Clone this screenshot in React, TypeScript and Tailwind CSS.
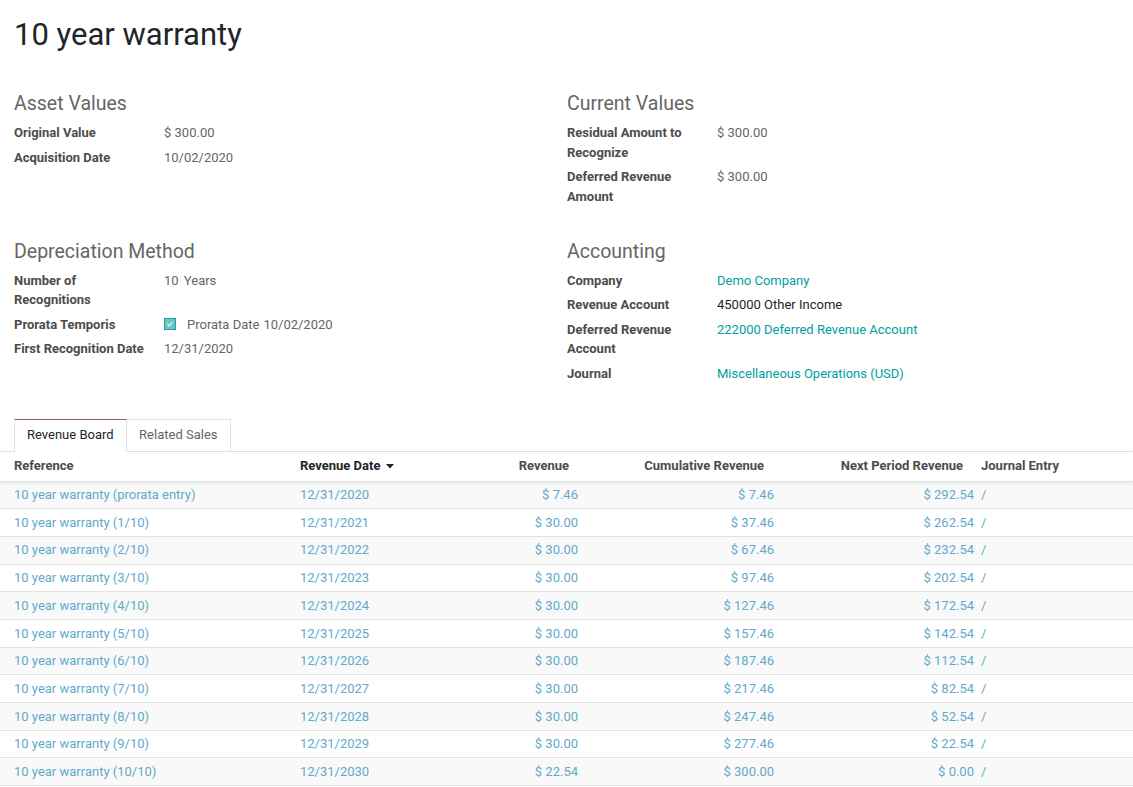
import React from "react";

type Field = { label: string; value: React.ReactNode };

function Group({ title, fields }: { title: string; fields: Field[] }) {
  return (
    <div className="flex flex-col">
      <div className="text-[19.5px] leading-[24px] text-[#666666] mb-[4.5px]">{title}</div>
      {fields.map((f, i) => (
        <div key={i} className="flex py-[2.5px] leading-[19.5px] text-[13px]">
          <div className="w-[150px] shrink-0 pr-[10px] font-bold text-[#4c4c4c]">{f.label}</div>
          <div className="flex-1">{f.value}</div>
        </div>
      ))}
    </div>
  );
}

const grey = "text-[#666666]";
const link = "text-[#00a09d]";

const rows = [
  ["10 year warranty (prorata entry)", "12/31/2020", "$ 7.46", "$ 7.46", "$ 292.54"],
  ["10 year warranty (1/10)", "12/31/2021", "$ 30.00", "$ 37.46", "$ 262.54"],
  ["10 year warranty (2/10)", "12/31/2022", "$ 30.00", "$ 67.46", "$ 232.54"],
  ["10 year warranty (3/10)", "12/31/2023", "$ 30.00", "$ 97.46", "$ 202.54"],
  ["10 year warranty (4/10)", "12/31/2024", "$ 30.00", "$ 127.46", "$ 172.54"],
  ["10 year warranty (5/10)", "12/31/2025", "$ 30.00", "$ 157.46", "$ 142.54"],
  ["10 year warranty (6/10)", "12/31/2026", "$ 30.00", "$ 187.46", "$ 112.54"],
  ["10 year warranty (7/10)", "12/31/2027", "$ 30.00", "$ 217.46", "$ 82.54"],
  ["10 year warranty (8/10)", "12/31/2028", "$ 30.00", "$ 247.46", "$ 52.54"],
  ["10 year warranty (9/10)", "12/31/2029", "$ 30.00", "$ 277.46", "$ 22.54"],
  ["10 year warranty (10/10)", "12/31/2030", "$ 22.54", "$ 300.00", "$ 0.00"],
];

const cols = "grid grid-cols-[289px_146px_148px_196px_200px_1fr]";

export default function App() {
  return (
    <div
      className="w-[1133px] h-[787px] overflow-hidden bg-white text-[13px]"
      style={{ fontFamily: "Roboto, 'Liberation Sans', sans-serif" }}
    >
      <div className="px-[14px]">
        <div className="pt-[17px] text-[31px] leading-[36px] text-[#212529]">10 year warranty</div>
        <div className="mt-[39px] grid grid-cols-[553px_1fr] gap-y-[31px]">
          <Group
            title="Asset Values"
            fields={[
              { label: "Original Value", value: <span className={grey}>$ 300.00</span> },
              { label: "Acquisition Date", value: <span className={grey}>10/02/2020</span> },
            ]}
          />
          <Group
            title="Current Values"
            fields={[
              { label: "Residual Amount to Recognize", value: <span className={grey}>$ 300.00</span> },
              { label: "Deferred Revenue Amount", value: <span className={grey}>$ 300.00</span> },
            ]}
          />
          <Group
            title="Depreciation Method"
            fields={[
              {
                label: "Number of Recognitions",
                value: (
                  <span className={grey}>
                    10 <span className="ml-[2px]">Years</span>
                  </span>
                ),
              },
              {
                label: "Prorata Temporis",
                value: (
                  <span className={`flex items-center ${grey}`}>
                    <span className="w-[12px] h-[12px] bg-[#6cc4c1] border border-[#1ba39f] flex items-center justify-center mr-[11px]">
                      <svg width="8" height="8" viewBox="0 0 8 8">
                        <path d="M1.5 4.2 L3.2 5.8 L6.5 2.3" stroke="#e8f6f5" strokeWidth="1.2" fill="none" />
                      </svg>
                    </span>
                    Prorata Date <span className="ml-[4px]">10/02/2020</span>
                  </span>
                ),
              },
              { label: "First Recognition Date", value: <span className={grey}>12/31/2020</span> },
            ]}
          />
          <Group
            title="Accounting"
            fields={[
              { label: "Company", value: <span className={link}>Demo Company</span> },
              { label: "Revenue Account", value: <span className="text-[#212529]">450000 Other Income</span> },
              { label: "Deferred Revenue Account", value: <span className={link}>222000 Deferred Revenue Account</span> },
              { label: "Journal", value: <span className={link}>Miscellaneous Operations (USD)</span> },
            ]}
          />
        </div>
      </div>

      {/* Tabs */}
      <div className="mt-[33px] flex border-b border-[#dee2e6] pl-[14px]">
        <div className="px-[12px] flex items-center text-[#212529] border-t border-t-[#875a7b] border-x border-x-[#dee2e6] bg-white -mb-px h-[33px] pb-px">
          Revenue Board
        </div>
        <div className="h-[32px] px-[12.5px] flex items-center text-[#666666] border-t border-r border-[#dee2e6]">
          Related Sales
        </div>
      </div>

      {/* Table */}
      <div className="relative">
        <div className={`${cols} h-[30px] items-center font-bold text-[#4c4c4c] border-b border-[#dee2e6] shadow-[0_2px_4px_rgba(0,0,0,0.07)] relative z-10 bg-white`}>
          <div className="pl-[14px]">Reference</div>
          <div className="pl-[11px] text-[#212529] flex items-center">
            Revenue Date
            <svg className="ml-[6px]" width="8" height="5" viewBox="0 0 8 5">
              <path d="M0 0 L8 0 L4 4.5 Z" fill="#212529" />
            </svg>
          </div>
          <div className="text-right pr-[14px]">Revenue</div>
          <div className="text-right pr-[15px]">Cumulative Revenue</div>
          <div className="text-right pr-[16px]">Next Period Revenue</div>
          <div className="pl-[2px]">Journal Entry</div>
        </div>
        {rows.map((r, i) => (
          <div
            key={i}
            className={`${cols} h-[27.7px] items-center text-[#62a9cb] border-b border-[#e3e3e3] ${
              i % 2 === 0 ? "bg-[#f9f9f9]" : "bg-white"
            }`}
          >
            <div className="pl-[14px]">{r[0]}</div>
            <div className="pl-[11px]">{r[1]}</div>
            <div className="text-right pr-[5px]">{r[2]}</div>
            <div className="text-right pr-[5px]">{r[3]}</div>
            <div className="text-right pr-[5px]">{r[4]}</div>
            <div className="pl-[2px]">/</div>
          </div>
        ))}
      </div>
    </div>
  );
}
